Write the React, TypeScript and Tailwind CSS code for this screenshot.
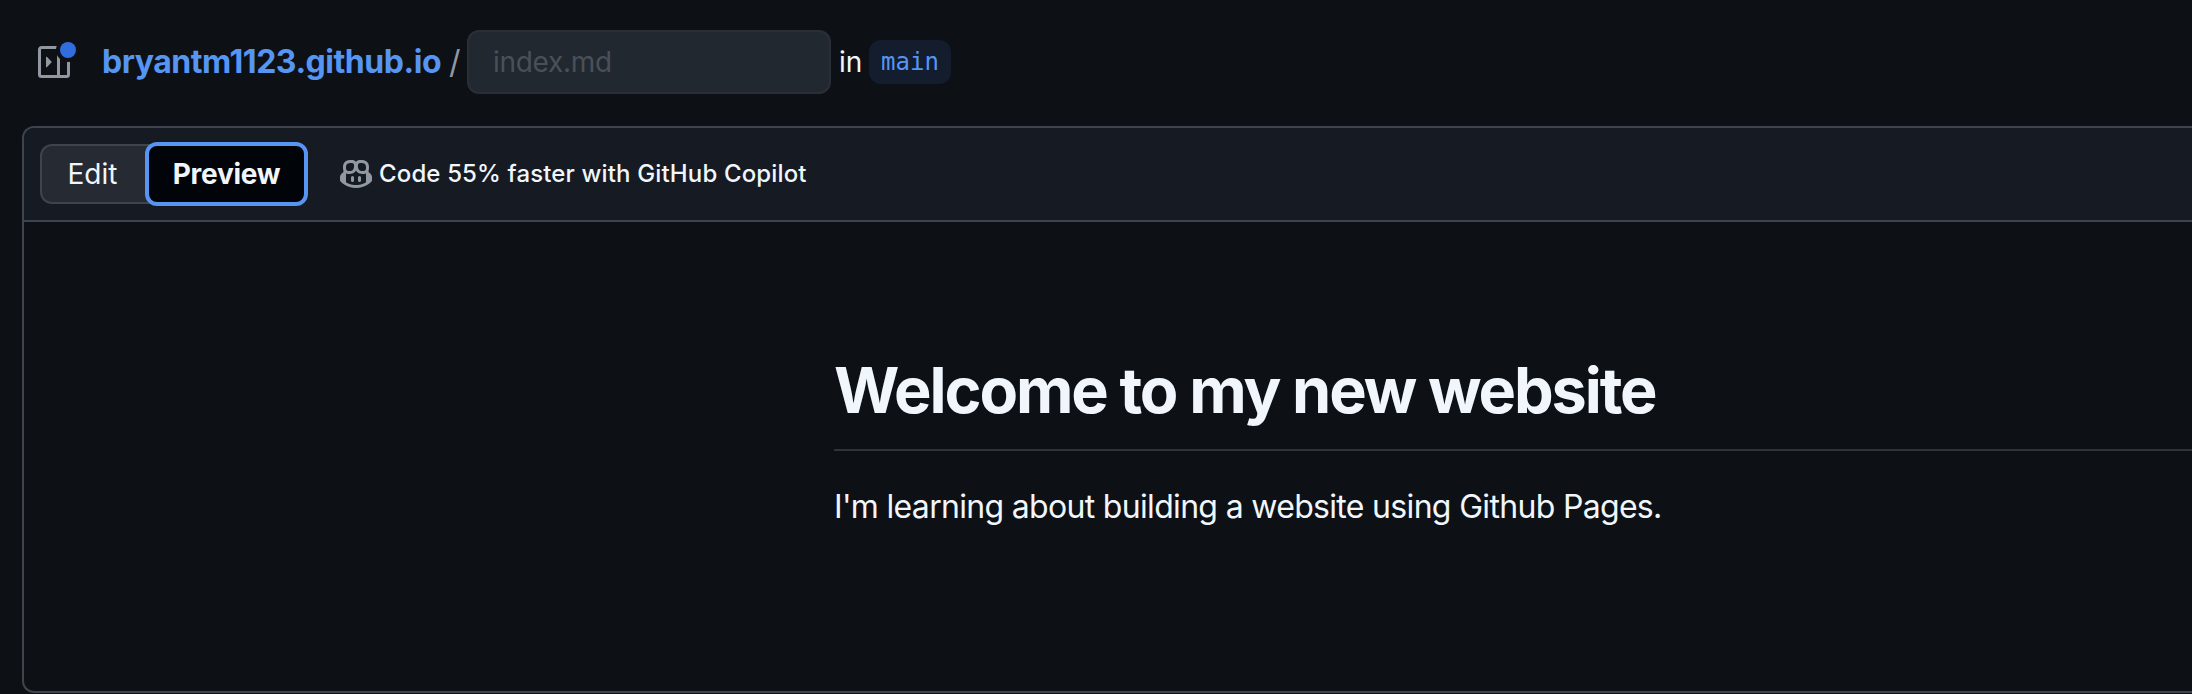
import React from "react";

function SidebarIcon() {
  return (
    <div className="relative h-8 w-8 shrink-0">
      <svg viewBox="0 0 16 16" className="h-8 w-8 fill-[#9198a1]">
        <path d="M6.823 7.823a.25.25 0 0 1 0 .354l-2.396 2.396A.25.25 0 0 1 4 10.396V5.604a.25.25 0 0 1 .427-.177Z" />
        <path d="M1.75 0h12.5C15.216 0 16 .784 16 1.75v12.5A1.75 1.75 0 0 1 14.25 16H1.75A1.75 1.75 0 0 1 0 14.25V1.75C0 .784.784 0 1.75 0ZM1.5 1.75v12.5c0 .138.112.25.25.25H9.5v-13H1.75a.25.25 0 0 0-.25.25ZM11 14.5h3.25a.25.25 0 0 0 .25-.25V1.75a.25.25 0 0 0-.25-.25H11Z" />
      </svg>
      <span className="absolute left-[22px] -top-1 h-4 w-4 rounded-full bg-[#316dde] ring-4 ring-[#0d1115]" />
    </div>
  );
}

function CopilotIcon() {
  return (
    <svg viewBox="0 0 16 16" className="h-8 w-8 shrink-0 fill-[#9198a1]">
      <path d="M7.998 15.035c-4.562 0-7.873-2.914-7.998-3.749V9.338c.085-.628.677-1.686 1.588-2.065.013-.07.024-.143.036-.218.029-.183.06-.384.126-.612-.201-.508-.254-1.084-.254-1.656 0-.87.128-1.769.693-2.484.579-.733 1.494-1.124 2.724-1.261 1.206-.134 2.262.034 2.944.765.05.053.096.108.139.165.044-.057.094-.112.143-.165.682-.731 1.738-.899 2.944-.765 1.23.137 2.145.528 2.724 1.261.566.715.693 1.614.693 2.484 0 .572-.053 1.148-.254 1.656.066.228.098.429.126.612.012.076.024.148.037.218.924.385 1.522 1.471 1.591 2.095v1.872c0 .766-3.351 3.795-8.002 3.795Zm0-1.485c2.28 0 4.584-1.11 5.002-1.433V7.862l-.023-.116c-.49.21-1.075.291-1.727.291-1.146 0-2.059-.327-2.71-.991A3.222 3.222 0 0 1 8 6.303a3.24 3.24 0 0 1-.544.743c-.65.664-1.563.991-2.71.991-.652 0-1.236-.081-1.727-.291l-.023.116v4.255c.419.323 2.722 1.433 5.002 1.433ZM6.762 2.83c-.193-.206-.637-.413-1.682-.297-1.019.113-1.479.404-1.713.7-.247.312-.369.789-.369 1.554 0 .793.129 1.171.308 1.371.162.181.519.379 1.442.379.853 0 1.339-.235 1.638-.54.315-.322.527-.827.617-1.553.117-.935-.037-1.395-.241-1.614Zm4.155-.297c-1.044-.116-1.488.091-1.681.297-.204.219-.359.679-.242 1.614.091.726.303 1.231.618 1.553.299.305.784.54 1.638.54.922 0 1.28-.198 1.442-.379.179-.2.308-.578.308-1.371 0-.765-.123-1.242-.37-1.554-.233-.296-.693-.587-1.713-.7Z" />
      <path d="M6.25 9.037a.75.75 0 0 1 .75.75v1.501a.75.75 0 0 1-1.5 0V9.787a.75.75 0 0 1 .75-.75Zm4.25.75v1.501a.75.75 0 0 1-1.5 0V9.787a.75.75 0 0 1 1.5 0Z" />
    </svg>
  );
}

export default function App() {
  return (
    <div className="flex h-[694px] flex-col overflow-hidden bg-[#0d1115] font-['Inter',sans-serif] text-[#f0f6fc]">
      <header className="flex h-[126px] shrink-0 items-center pl-[38px] pb-[2px]">
        <SidebarIcon />
        <a className="ml-8 w-[340px] whitespace-nowrap text-[32px] font-[650] tracking-[-0.47px] text-[#5795f2]">
          bryantm1123.github.io
        </a>
        <span className="ml-[3px] w-[22px] pl-1 text-[32px] text-[#9198a1]">/</span>
        <input
          placeholder="index.md"
          className="h-16 w-[364px] shrink-0 rounded-xl border-2 border-[#2a2f37] bg-[#212830] px-6 text-[28px] tracking-[-0.3px] outline-none placeholder:text-[#4a5058]"
        />
        <span className="ml-2 w-[30px] whitespace-nowrap text-[28px]">in</span>
        <span className="flex h-11 w-[82px] items-center justify-center rounded-xl bg-[#131d2e] font-['DejaVu_Sans_Mono',monospace] text-[24px] text-[#5795f2]">
          main
        </span>
      </header>
      <main className="ml-[22px] flex h-[567px] shrink-0 flex-col overflow-hidden rounded-l-xl border-2 border-r-0 border-[#3d444d]">
        <div className="flex h-[94px] shrink-0 items-center border-b-2 border-[#3d444d] bg-[#161b23] pl-4">
          <div className="flex h-16 items-center">
            <button className="h-[60px] w-[117px] rounded-l-xl border-2 border-r-0 border-[#3d444d] bg-[#262a33] pr-[14px] text-center text-[28px]">
              Edit
            </button>
            <button className="-ml-3 h-16 w-[163px] rounded-xl border-4 border-[#5795f2] bg-[#010409] text-[28px] font-[650] tracking-[-0.3px]">
              Preview
            </button>
          </div>
          <div className="ml-8 flex items-center gap-[7px]">
            <CopilotIcon />
            <span className="whitespace-nowrap text-[24px] font-medium tracking-[0.14px]">Code 55% faster with GitHub Copilot</span>
          </div>
        </div>
        <article className="ml-[810px] pt-[128px]">
          <h1 className="h-[101px] whitespace-nowrap border-b-2 border-[#2f343b] text-[63px] leading-[80px] font-[650] tracking-[-2.12px]">
            Welcome to my new website
          </h1>
          <p className="mt-8 whitespace-nowrap text-[32px] leading-[48px] tracking-[-0.68px]">
            I'm learning about building a website using Github Pages.
          </p>
        </article>
      </main>
    </div>
  );
}
